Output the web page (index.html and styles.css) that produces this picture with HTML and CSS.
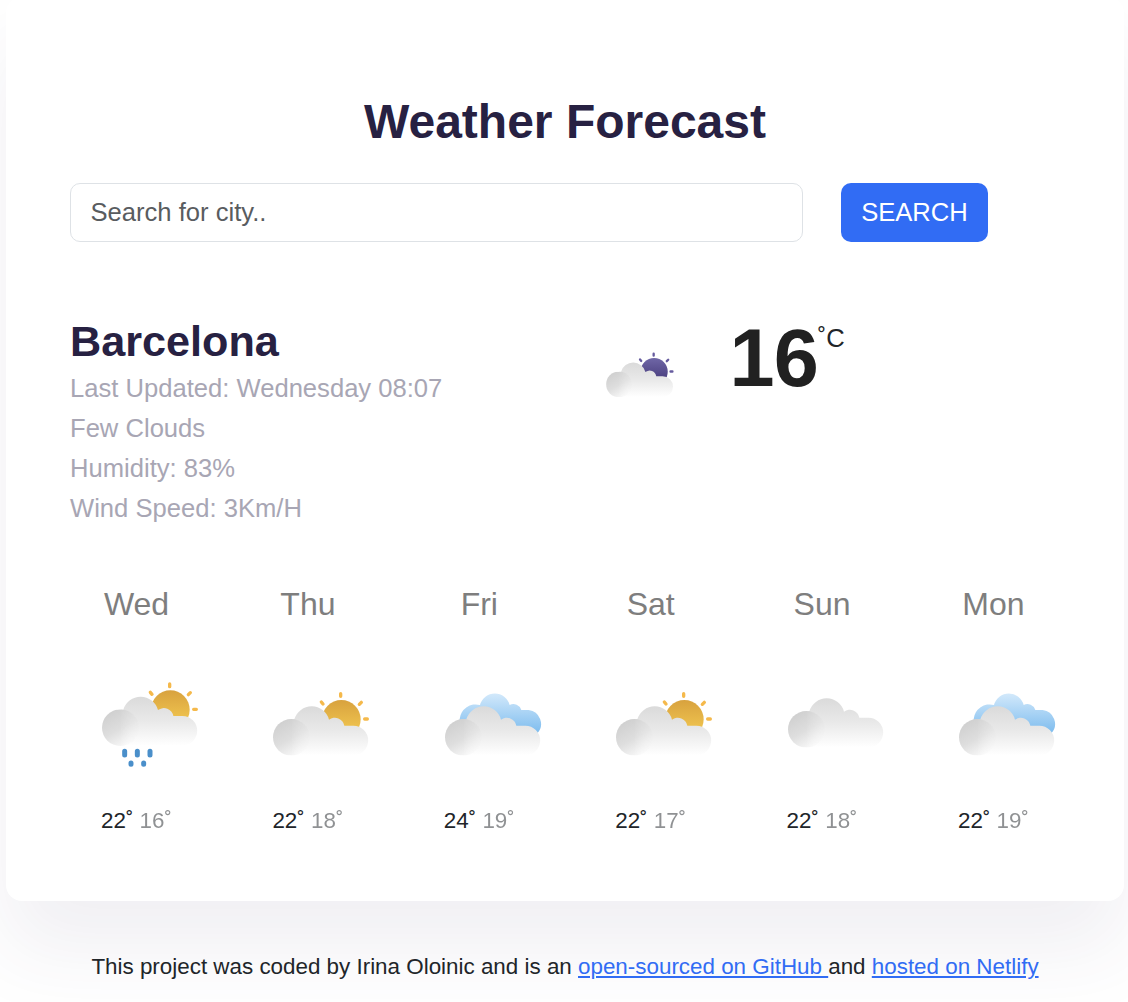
FILE: index.html
```html
<!DOCTYPE html>
<html lang="en">
<head>
<meta charset="utf-8">
<title>Weather Forecast</title>
<link rel="stylesheet" href="styles.css">
</head>
<body>
<svg class="defs" width="0" height="0" aria-hidden="true">
  <defs>
    <linearGradient id="cloud-fill" gradientUnits="userSpaceOnUse" x1="0" y1="108" x2="0" y2="256"><stop offset="0" stop-color="#dadada"/><stop offset=".5" stop-color="#e9e9e9"/><stop offset="1" stop-color="#fff"/></linearGradient>
    <linearGradient id="puff-fill" x1=".2" y1=".1" x2=".7" y2="1"><stop offset="0" stop-color="#d0d0d0"/><stop offset=".5" stop-color="#dedede"/><stop offset="1" stop-color="#fafafa"/></linearGradient>
    <linearGradient id="puff-side" x1="0" y1="0" x2="1" y2="0"><stop offset="0" stop-color="#fff"/><stop offset=".5" stop-color="#fff"/><stop offset="1" stop-color="#fff" stop-opacity=".2"/></linearGradient>
    <mask id="puff-mask" maskUnits="userSpaceOnUse" x="38" y="147" width="110" height="110"><rect x="38" y="147" width="110" height="110" fill="url(#puff-side)"/></mask>
    <linearGradient id="sun-fill" x1="0" y1="0" x2="0" y2="1"><stop offset="0" stop-color="#d8a23e"/><stop offset=".75" stop-color="#efc34f"/></linearGradient>
    <linearGradient id="night-fill" x1="0" y1="0" x2="0" y2="1"><stop offset="0" stop-color="#6f66a6"/><stop offset=".75" stop-color="#4b4080"/></linearGradient>
    <linearGradient id="blue-fill" gradientUnits="userSpaceOnUse" x1="0" y1="70" x2="0" y2="190"><stop offset="0" stop-color="#d3e9fb"/><stop offset="1" stop-color="#7dbcee"/></linearGradient>
    <g id="cloud">
      <path fill="url(#cloud-fill)" d="M93 257A54 54 0 0 1 102 148A54 54 0 0 1 206 149A29 29 0 0 1 252 167H279A44 44 0 0 1 279 256Z"/>
      <circle cx="93" cy="202" r="55" fill="url(#puff-fill)" mask="url(#puff-mask)"/>
    </g>
    <g id="rays" fill="none" stroke-width="10" stroke-linecap="round"><path d="M241 71V79M183 96L188 102M303 97L297 103M313 147H321"/></g>
    <g id="sun"><circle cx="243" cy="148" r="58" fill="url(#sun-fill)"/><use href="#rays" stroke="#f5b94b"/></g>
    <g id="moon"><circle cx="243" cy="148" r="58" fill="url(#night-fill)"/><use href="#rays" stroke="#665b9e"/></g>
    <path id="blue-cloud" fill="url(#blue-fill)" d="M134 199A48 48 0 1 1 143 105A46 46 0 0 1 232 105A25 25 0 0 1 267 120H289A42 42 0 0 1 315 190Z"/>
    <g id="drops" stroke="#4a8fca" stroke-width="15" stroke-linecap="round"><path d="M106 273V284M144 273V284M182 273V284M125 308V312M163 308V312"/></g>
  </defs>
</svg>
<main class="card">
  <h1 class="title">Weather Forecast</h1>
  <form class="search">
    <input class="search-input" type="search" placeholder="Search for city..">
    <button class="search-button" type="button">SEARCH</button>
  </form>
  <section class="current">
    <div class="place">
      <h2 class="city">Barcelona</h2>
      <ul class="details">
        <li>Last Updated: Wednesday 08:07</li>
        <li>Few Clouds</li>
        <li>Humidity: 83%</li>
        <li>Wind Speed: 3Km/H</li>
      </ul>
    </div>
    <div class="reading">
      <svg class="current-icon" viewBox="-56 0 399 330"><use href="#moon"/><use href="#cloud"/></svg>
      <span class="temperature">16</span><span class="unit">˚C</span>
    </div>
  </section>
  <section class="forecast">
    <div class="day"><div class="name">Wed</div><svg class="icon" viewBox="-58 0 399 330"><g transform="translate(0 -29)"><use href="#sun"/><use href="#cloud"/></g><use href="#drops" y="-29"/></svg><div class="temps">22˚ <span class="low">16˚</span></div></div>
    <div class="day"><div class="name">Thu</div><svg class="icon" viewBox="-58 0 399 330"><use href="#sun"/><use href="#cloud"/></svg><div class="temps">22˚ <span class="low">18˚</span></div></div>
    <div class="day"><div class="name">Fri</div><svg class="icon" viewBox="-58 0 399 330"><use href="#blue-cloud"/><use href="#cloud"/></svg><div class="temps">24˚ <span class="low">19˚</span></div></div>
    <div class="day"><div class="name">Sat</div><svg class="icon" viewBox="-58 0 399 330"><use href="#sun"/><use href="#cloud"/></svg><div class="temps">22˚ <span class="low">17˚</span></div></div>
    <div class="day"><div class="name">Sun</div><svg class="icon" viewBox="-58 0 399 330"><use href="#cloud" y="-24"/></svg><div class="temps">22˚ <span class="low">18˚</span></div></div>
    <div class="day"><div class="name">Mon</div><svg class="icon" viewBox="-58 0 399 330"><use href="#blue-cloud"/><use href="#cloud"/></svg><div class="temps">22˚ <span class="low">19˚</span></div></div>
  </section>
</main>
<footer class="footer">This project was coded by Irina Oloinic and is an <a href="#">open-sourced on GitHub </a>and <a href="#">hosted on Netlify</a></footer>
</body>
</html>
```
FILE: styles.css
```css
* { box-sizing: border-box; }
body {
  margin: 0;
  height: 1002px;
  overflow: hidden;
  display: flow-root;
  background: #fff;
  color: #212529;
  font: 25.6px "Liberation Sans", Arial, sans-serif;
}
.defs { display: block; }
.card {
  width: 1118px;
  height: 904px;
  margin: -3px 0 0 6px;
  padding: 96px 64px 0;
  border-radius: 16px;
  background: #fff;
  box-shadow: 0 48px 80px rgba(65, 50, 100, .08);
}
.title {
  margin: 0 0 32px;
  color: #272142;
  font-size: 48px;
  line-height: 58px;
  text-align: center;
}
.search { display: flex; gap: 38px; }
.search-input {
  width: 733px;
  height: 59px;
  padding: 0 19.5px;
  border: 1px solid #dee2e6;
  border-radius: 10px;
  background: #fff;
  font: inherit;
  appearance: none;
}
.search-input::placeholder { color: #595c5f; opacity: 1; }
.search-button {
  width: 147px;
  height: 59px;
  padding: 0;
  border: 0;
  border-radius: 10px;
  background: #316cf4;
  color: #fff;
  font: inherit;
}
.current { display: flex; height: 269px; padding-top: 73px; }
.place { width: 514px; }
.city { margin: 0 0 1px; color: #272142; font-size: 43.2px; line-height: 52px; }
.details { margin: 0; padding: 0; list-style: none; color: #a8a6b4; line-height: 40px; }
.reading { display: flex; align-items: flex-start; }
.current-icon { width: 93.6px; height: 77.4px; margin: 21.5px 52px 0 0; }
.temperature { margin-top: -5px; color: #212121; font-size: 81px; font-weight: 700; line-height: 96px; letter-spacing: -1px; }
.unit { margin-top: 3px; line-height: 40px; }
.forecast { display: grid; grid-template-columns: repeat(6, 1fr); margin: 73px -19.2px 0; }
.day { display: flex; flex-direction: column; align-items: center; }
.name { color: #7e7e7e; font-size: 32px; line-height: 40px; }
.icon { width: 133px; height: 110px; margin: 46px 0 24px; }
.temps { font-size: 22.4px; line-height: 34px; }
.low { opacity: .5; }
.footer { margin-top: 49px; padding-left: 2px; font-size: 22.4px; line-height: 34px; text-align: center; }
.footer a { color: #316cf4; }
```
